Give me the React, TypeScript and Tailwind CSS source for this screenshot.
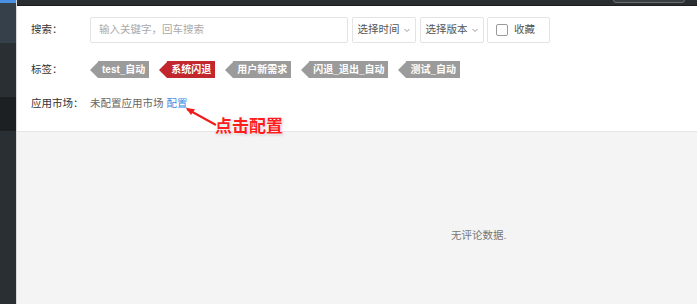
import React from 'react';

const tags = [
  { name: 'test_自动', active: false },
  { name: '系统闪退', active: true },
  { name: '用户新需求', active: false },
  { name: '闪退_退出_自动', active: false },
  { name: '测试_自动', active: false },
];

const Tag: React.FC<{ name: string; active: boolean }> = ({ name, active }) => (
  <div className="flex items-center h-[17px] shrink-0">
    <span
      className={`w-0 h-0 border-y-[8.5px] border-y-transparent border-r-[8px] ${active ? 'border-r-[#c1272d]' : 'border-r-[#9b9b9b]'}`}
    />
    <span
      className={`h-[17px] flex items-center px-[4px] text-[10px] font-bold whitespace-nowrap text-white ${active ? 'bg-[#c1272d]' : 'bg-[#9b9b9b]'}`}
    >
      {name}
    </span>
  </div>
);

const Chevron = () => (
  <svg width="8" height="8" viewBox="0 0 8 8" className="ml-[3px]">
    <path d="M1.5 3l2.5 2.5L6.5 3" fill="none" stroke="#999" strokeWidth="1" />
  </svg>
);

export default function App() {
  return (
    <div
      className="flex w-[697px] h-[304px] overflow-hidden text-[10.5px] text-[#333]"
      style={{ fontFamily: '"Liberation Sans", "Noto Sans CJK SC", sans-serif' }}
    >
      {/* sidebar */}
      <div className="w-[17px] shrink-0 flex flex-col border-r border-[#d8d8d8] bg-[#2a2f33]">
        <div className="h-[3px] bg-[#4a90e2]" />
        <div className="h-[40px] bg-[#35404a]" />
        <div className="h-[54px] bg-[#2a2f33]" />
        <div className="h-[34px] bg-[#1c2022]" />
        <div className="flex-1 bg-[#2a2f33]" />
      </div>

      <div className="flex-1 flex flex-col">
        {/* header */}
        <div className="h-[6px] bg-[#2a2d30] border-b border-[#1b1d1f] overflow-hidden flex justify-end pr-[12px]">
          <div className="w-[72px] h-[20px] -mt-[17px] rounded-[3px] border border-[#6a6d70] bg-[#3a3d40]" />
        </div>

        {/* filters */}
        <div className="relative bg-white pt-[11px] pb-[20px] pl-[14px] border-b border-[#e6e6e6] whitespace-nowrap">
          <div className="flex items-center h-[26px]">
            <span className="w-[59px] shrink-0">搜索：</span>
            <div className="w-[258px] h-[26px] border border-[#e3e3e3] rounded-[2px] flex items-center px-[8px] text-[#aaa]">
              输入关键字，回车搜索
            </div>
            <div className="ml-[4px] w-[64px] h-[26px] border border-[#e3e3e3] rounded-[2px] flex items-center justify-center text-[#555]">
              选择时间<Chevron />
            </div>
            <div className="ml-[4px] w-[64px] h-[26px] border border-[#e3e3e3] rounded-[2px] flex items-center justify-center text-[#555]">
              选择版本<Chevron />
            </div>
            <div className="ml-[3px] w-[63px] h-[26px] border border-[#e3e3e3] rounded-[2px] flex items-center pl-[8px] text-[#555]">
              <span className="w-[12px] h-[12px] border border-[#999] rounded-[2px] mr-[6px]" />
              收藏
            </div>
          </div>

          <div className="flex items-center mt-[18px] h-[17px]">
            <span className="w-[59px] shrink-0">标签：</span>
            <div className="flex gap-[10px]">
              {tags.map(t => (
                <Tag key={t.name} name={t.name} active={t.active} />
              ))}
            </div>
          </div>

          <div className="flex items-center mt-[19px] h-[14px]">
            <span className="w-[59px] shrink-0">应用市场：</span>
            <span className="text-[#666]">未配置应用市场</span>
            <span className="ml-[3px] text-[#3d8be3]">配置</span>
          </div>

          {/* annotation */}
          <svg width="34" height="22" viewBox="0 0 34 22" className="absolute left-[168px] top-[101px]">
            <path d="M2 2l29 16" stroke="#ef1c1c" strokeWidth="2" fill="none" />
            <path d="M1 1l9 1.2-4 5.8z" fill="#ef1c1c" />
          </svg>
          <span
            className="absolute left-[198px] top-[108px] text-[17px] font-bold text-[#ff1e1e]"
            style={{ textShadow: '0 0 2px #fff, 0 0 2px #fff, 1px 1px 3px #bbb' }}
          >
            点击配置
          </span>
        </div>

        {/* content */}
        <div className="flex-1 bg-[#f4f4f4] pt-[96px] pl-[434px] text-[#777]">
          无评论数据.
        </div>
      </div>
    </div>
  );
}
